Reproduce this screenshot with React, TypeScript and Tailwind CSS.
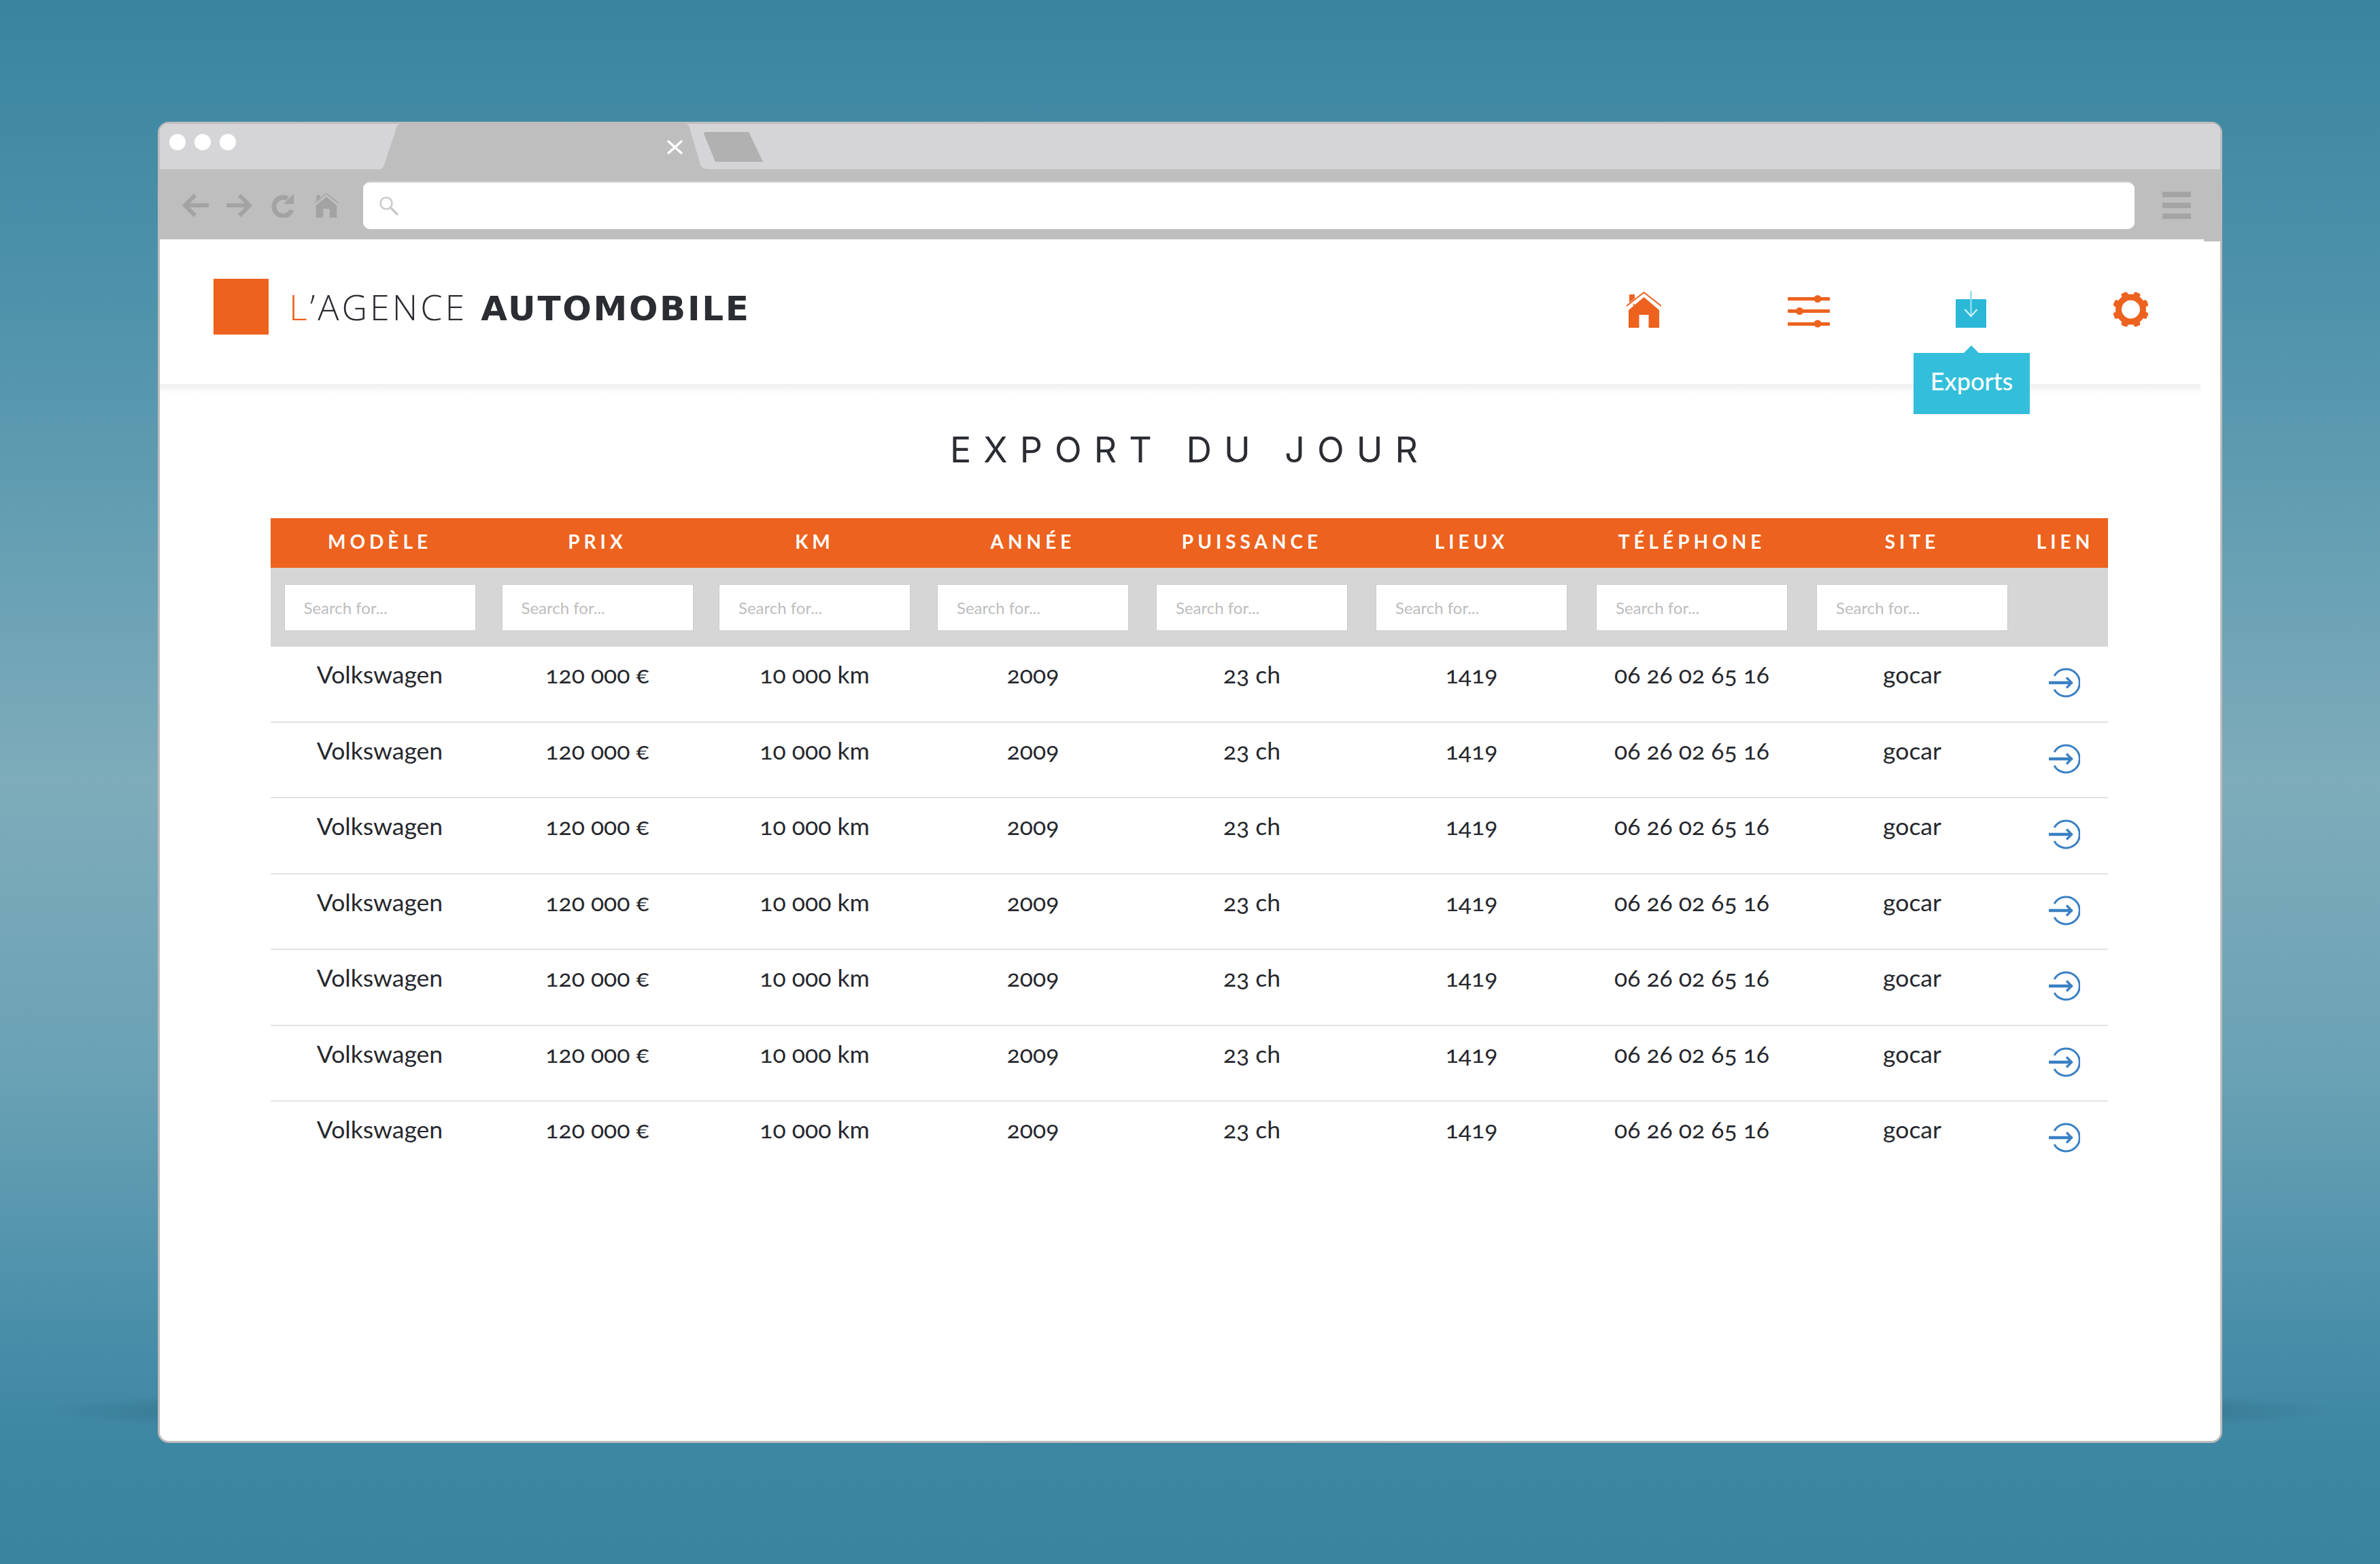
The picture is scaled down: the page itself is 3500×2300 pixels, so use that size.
import React from "react";

const columns = ["MODÈLE", "PRIX", "KM", "ANNÉE", "PUISSANCE", "LIEUX", "TÉLÉPHONE", "SITE", "LIEN"];
const row = ["Volkswagen", "120 000 €", "10 000 km", "2009", "23 ch", "1419", "06 26 02 65 16", "gocar"];
const rows = [0, 1, 2, 3, 4, 5, 6];

const gridCols = "grid grid-cols-[321px_319px_320px_322px_322px_324px_324px_324px_126px]";

function HomeIcon({ className, gap }: { className: string; gap: string }) {
  return (
    <svg viewBox="0 0 53 53" className={className} fill="currentColor">
      <rect x="5" y="4" width="8" height="16" />
      <path d="M4 27 L26.5 8 L49 27 V53 H33.5 V34 H19.5 V53 H4 Z" />
      <path d="M1 23 L26.5 3 L52 23" fill="none" stroke={gap} strokeWidth="6" />
      <path d="M1 21 L26.5 1 L52 21" fill="none" stroke="currentColor" strokeWidth="2" />
    </svg>
  );
}

function SlidersIcon() {
  return (
    <svg width="62" height="49" viewBox="0 0 62 49" className="text-[#ec621e]" fill="currentColor">
      <rect x="0" y="4" width="62" height="5" rx="1" />
      <rect x="0" y="22" width="62" height="5" rx="1" />
      <rect x="0" y="41" width="62" height="5" rx="1" />
      <circle cx="44" cy="6.5" r="5.5" />
      <circle cx="17.5" cy="24.5" r="5.5" />
      <circle cx="44" cy="43" r="5.5" />
    </svg>
  );
}

function DownloadIcon() {
  return (
    <svg width="45" height="54" viewBox="0 0 45 54">
      <rect x="0" y="12" width="45" height="42" fill="#2bb8d7" />
      <path d="M22.5 0 V37" fill="none" stroke="#8fdcee" strokeWidth="2.5" />
      <path d="M13.5 27 L22.5 37 L31.5 27" fill="none" stroke="#c9f0f8" strokeWidth="2.5" />
    </svg>
  );
}

function GearIcon() {
  const teeth = [22.5, 67.5, 112.5, 157.5, 202.5, 247.5, 292.5, 337.5];
  return (
    <svg width="53" height="54" viewBox="0 0 53 54" fill="#ec621e">
      {teeth.map((deg) => (
        <rect key={deg} x="21.5" y="0.5" width="10" height="12" rx="3" transform={`rotate(${deg} 26.5 27)`} />
      ))}
      <circle cx="26.5" cy="27" r="18" fill="none" stroke="#ec621e" strokeWidth="9" />
    </svg>
  );
}

function ArrowCircle() {
  return (
    <svg width="46" height="44" viewBox="0 0 46 44" fill="none" stroke="#3a80c3" strokeWidth="3">
      <path d="M8 12 A20 20 0 1 1 8 32" />
      <path d="M0 22 H32" strokeWidth="4.5" />
      <path d="M26 14.5 L33.5 22 L26 29.5" strokeWidth="3.4" />
    </svg>
  );
}

function BrowserTabs() {
  return (
    <svg width="565" height="67" viewBox="0 0 565 67" className="ml-[210px] shrink-0">
      <path d="M0 67 C5 67 7 64 8 60 L26 6 C27 2 30 0 34 0 H450 C454 0 456 2 457 6 L473 60 C475 65 480 67 489 67 Z" fill="#bfbebe" />
      <path d="M478 15 Q478 12 482 12 H542 Q545 12 546 16 L565 56 H495 Z" fill="#b2b1b1" />
      <path d="M425 25 L446 44 M446 25 L425 44" stroke="#fff" strokeWidth="3.5" />
    </svg>
  );
}

export default function App() {
  return (
    <div className="relative flex h-[2300px] w-[3500px] justify-center overflow-hidden bg-[linear-gradient(180deg,#3a84a0_0%,#4f93ab_20%,#7eacbb_50%,#6ba2b5_68%,#458ca8_87%,#3e87a3_92%,#3b84a0_100%)] pt-[179px] font-['Lato',sans-serif]">
      <div className="absolute left-[60px] top-[2025px] h-[100px] w-[3380px] bg-[radial-gradient(closest-side,rgba(40,90,115,0.5),rgba(40,90,115,0.28)_88%,rgba(40,90,115,0))]" />

      <div className="relative flex h-[1943px] w-[3036px] flex-col overflow-hidden rounded-[16px] border-[3px] border-[#bdbcbc] bg-white">
        <div className="flex h-[67px] shrink-0 items-start bg-[#d5d5d7]">
          <div className="flex gap-[13px] pl-[14px] pt-[15px]">
            <span className="h-[24px] w-[24px] rounded-full bg-white" />
            <span className="h-[24px] w-[24px] rounded-full bg-white" />
            <span className="h-[24px] w-[24px] rounded-full bg-white" />
          </div>
          <BrowserTabs />
        </div>

        <div className="flex h-[103px] shrink-0 items-center bg-[#bfbebe] pl-[33px] pt-[3px] text-[#a3a3a3]">
          <svg width="39" height="34" viewBox="0 0 39 34" fill="none" stroke="currentColor" strokeWidth="6">
            <path d="M39 17 H5 M19 2 L4 17 L19 32" />
          </svg>
          <svg width="38" height="34" viewBox="0 0 38 34" fill="none" stroke="currentColor" strokeWidth="6" className="ml-[26px]">
            <path d="M0 17 H34 M19 2 L34 17 L19 32" />
          </svg>
          <svg width="35" height="35" viewBox="0 0 35 35" className="ml-[27px]">
            <path d="M31 24 A13.5 13.5 0 1 1 25 7" fill="none" stroke="currentColor" strokeWidth="7" />
            <path d="M34 0 V15 H19 Z" fill="currentColor" />
          </svg>
          <HomeIcon className="ml-[29px] h-[36px] w-[36px]" gap="#bfbebe" />
          <div className="ml-[36px] flex h-[70px] w-[2605px] items-center rounded-[10px] border-t-2 border-[#dcdcdc] bg-white pl-[23px]">
            <svg width="30" height="28" viewBox="0 0 30 28" fill="none" stroke="#c9c9c9" strokeWidth="2.5">
              <circle cx="11" cy="10" r="8.5" />
              <path d="M17 16 L28 27" strokeWidth="3.5" />
            </svg>
          </div>
          <div className="ml-[41px] flex w-[42px] flex-col gap-[8px]">
            <span className="h-[8px] rounded-[1px] bg-[#a4a4a4]" />
            <span className="h-[8px] rounded-[1px] bg-[#a4a4a4]" />
            <span className="h-[8px] rounded-[1px] bg-[#a4a4a4]" />
          </div>
        </div>
        <span className="absolute right-0 top-[170px] z-20 h-[3px] w-[24px] bg-[#bfbebe]" />

        <header className="relative z-10 mr-[29px] flex h-[215px] shrink-0 items-center border-b-2 border-[#e2dfdf] bg-white pb-[16px] pl-[79px]">
          <div className="absolute left-0 right-0 top-full h-[14px] bg-gradient-to-b from-[#efeeee] to-white" />
          <div className="h-[82px] w-[81px] bg-[#ec621e]" />
          <div className="ml-[30px] mt-[2px] flex items-baseline whitespace-nowrap text-[50px] leading-none text-[#2b2d33]">
            <span className="font-['Open_Sans',sans-serif] text-[52px] font-light tracking-[4px]">
              <span className="text-[#ec621e]">L</span>’AGENCE
            </span>
            <span className="ml-[20px] font-['DejaVu_Sans',sans-serif] font-bold tracking-[2.7px]">AUTOMOBILE</span>
          </div>
          <div className="ml-auto mt-[8px] flex items-end pr-[76px]">
            <HomeIcon className="h-[53px] w-[53px] text-[#ec621e]" gap="#ffffff" />
            <div className="ml-[185px]"><SlidersIcon /></div>
            <div className="relative ml-[185px] flex">
              <DownloadIcon />
              <div className="absolute left-[-62px] top-[91px] flex h-[90px] w-[171px] items-center justify-center bg-[#33bfdb] pb-[8px] text-[36px] font-medium text-white">
                <span className="absolute left-[74px] top-[-11px] h-0 w-0 border-x-[11px] border-b-[11px] border-x-transparent border-b-[#33bfdb]" />
                Exports
              </div>
            </div>
            <div className="ml-[186px]"><GearIcon /></div>
          </div>
        </header>

        <h1 className="mt-[65px] text-center font-['Inter',sans-serif] text-[52px] font-normal leading-[60px] tracking-[18px] text-[#2b2d33]">
          EXPORT DU JOUR
        </h1>

        <div className="ml-[163px] mt-[70px] w-[2702px]">
          <div className={`${gridCols} h-[73px] items-center bg-[#ec621e] pb-[6px] text-center text-[28px] font-bold tracking-[6px] text-white`}>
            {columns.map((c) => (
              <div key={c}>{c}</div>
            ))}
          </div>
          <div className={`${gridCols} h-[116px] items-center bg-[#d6d6d6]`}>
            {columns.slice(0, 8).map((c) => (
              <div key={c} className="flex justify-center">
                <input
                  placeholder="Search for..."
                  className="h-[69px] w-[282px] border border-[#cccccc] bg-white pl-[28px] text-[24px] outline-none placeholder:text-[#bdbdbd]"
                />
              </div>
            ))}
          </div>
          {rows.map((r) => (
            <div key={r} className={`${gridCols} h-[111.5px] border-b-2 border-[#e2e2e2] text-center text-[35.5px] leading-[44px] text-[#26282e] oldstyle-nums last:border-b-0`}>
              {row.map((cell, i) => (
                <div key={i} className="pt-[19px]">{cell}</div>
              ))}
              <div className="flex justify-center pr-[2px] pt-[31px]"><ArrowCircle /></div>
            </div>
          ))}
        </div>
      </div>
    </div>
  );
}
